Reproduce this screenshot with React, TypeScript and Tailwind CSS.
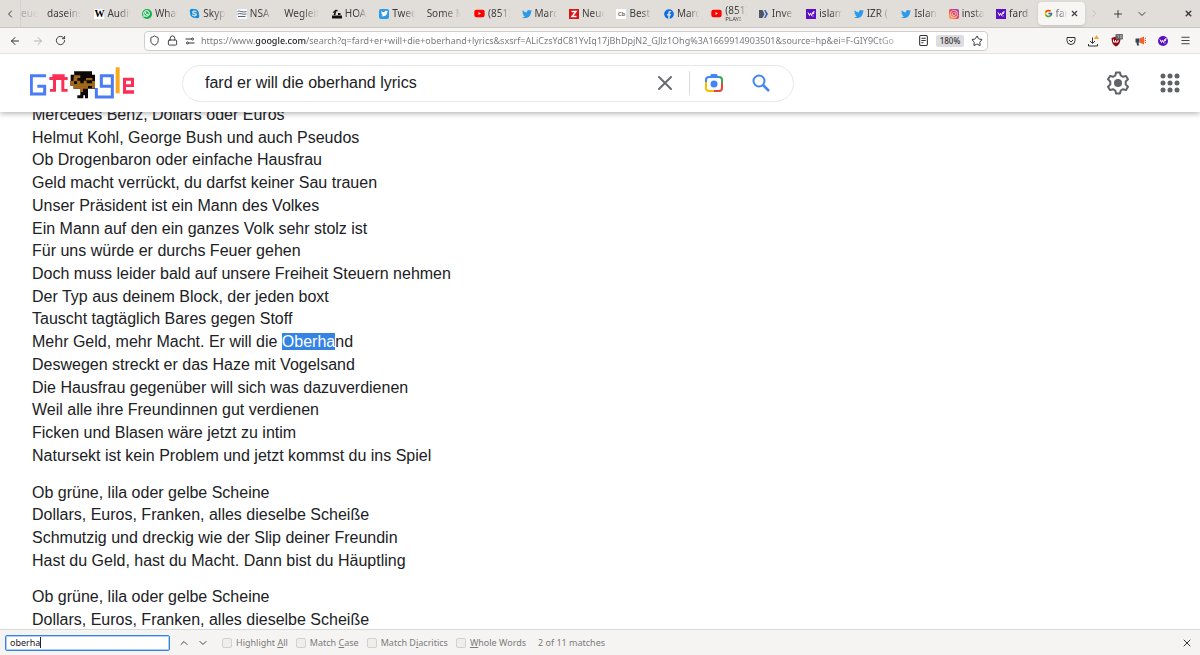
import { useState, type ReactNode } from "react";
import { ArrowLeft, ArrowRight, ChevronDown, ChevronLeft, ChevronRight, ChevronUp, Lock, Menu, Plus, RotateCw, Shield, Star, X } from "lucide-react";
import { FaWhatsapp, FaSkype, FaTwitter, FaYoutube, FaFacebook, FaInstagram } from "react-icons/fa";
import { FcGoogle } from "react-icons/fc";

const Yahoo = ({ round = false }: { round?: boolean }) => (
  <svg viewBox="0 0 20 20" className="size-[10px]">
    <rect width="20" height="20" rx={round ? 10 : 0} fill="#5b10c4" />
    <path d="M4 7l3 6 2-5 2 5 3-7M16 4l-1 6M14 13v2" stroke="#fff" strokeWidth="2" fill="none" />
  </svg>
);

const Bird = () => <FaTwitter className="size-[10px] text-[#2b9ae8]" />;
const Tube = () => <FaYoutube className="size-[11px] text-[#f00]" />;

type Tab = { icon?: ReactNode; title: string; note?: string };

const tabs: Tab[] = [
  { title: "daseins" },
  { icon: <span className="w-[10px] bg-white text-center font-['Liberation_Serif',serif] text-[10px] leading-[10px] font-bold text-black">W</span>, title: "Audit" },
  {
    icon: (
      <span className="flex size-[10px] items-center justify-center rounded-full bg-[#12b04c] text-white">
        <FaWhatsapp className="size-[7px]" strokeWidth={30} stroke="white" />
      </span>
    ),
    title: "What",
  },
  { icon: <FaSkype className="size-[11px] text-[#0a8de0]" />, title: "Skyp" },
  {
    icon: (
      <svg viewBox="0 0 20 20" className="size-[10px]">
        <path fill="#f8f8fa" d="M0 0h20v20H0z" />
        <path d="M1 5c5-3 7 3 18 0M1 10c6-3 9 2 18 0M2 15h15" stroke="#59647c" strokeWidth="2" fill="none" />
      </svg>
    ),
    title: "NSA",
  },
  { title: "Wegleit" },
  {
    icon: (
      <svg viewBox="0 0 20 20" className="size-[10px]">
        <path d="M0 19v-6h20v6zM3 12l2-5-4 1 3-4 4-3 5 3-5 1-1 7zM12 12V8h5v4z" fill="#111" />
      </svg>
    ),
    title: "HOA",
  },
  {
    icon: (
      <span className="flex size-[10px] items-center justify-center rounded-xs bg-[#2b9ae8] text-white">
        <FaTwitter className="size-[7px]" />
      </span>
    ),
    title: "Twee",
  },
  { title: "Some M" },
  { icon: <Tube />, title: "(851)" },
  { icon: <Bird />, title: "Marc" },
  {
    icon: (
      <svg viewBox="0 0 20 20" className="size-[10px]">
        <path fill="#d81414" d="M0 0h20v20H0z" />
        <path d="M5 5h9L6 15h9" stroke="#fff" strokeWidth="3" fill="none" />
      </svg>
    ),
    title: "Neue",
  },
  { icon: <span className="size-[10px] bg-white text-center text-[6px] leading-[10px] font-bold text-[#777]">Cb</span>, title: "Best" },
  { icon: <FaFacebook className="size-[10px] text-[#0f6fe8]" />, title: "Marc" },
  { icon: <Tube />, title: "(851)", note: "PLAYI" },
  {
    icon: (
      <svg viewBox="0 0 20 20" className="size-[10px]">
        <path d="M0 2h7l4 8-4 8H0z" fill="#4b5668" />
        <path d="M10 2h3l5 8-5 8h-3l4-8z" fill="#2f62ad" />
      </svg>
    ),
    title: "Inve",
  },
  { icon: <Yahoo />, title: "islam" },
  { icon: <Bird />, title: "IZR (" },
  { icon: <Bird />, title: "Islan" },
  {
    icon: (
      <span className="flex size-[10px] items-center justify-center rounded-xs bg-linear-to-tr from-[#fcb045] via-[#f0304c] to-[#833ab4] text-white">
        <FaInstagram className="size-[8px]" />
      </span>
    ),
    title: "insta",
  },
  { icon: <Yahoo />, title: "fard" },
];

function TabStrip() {
  return (
    <div className="flex h-7 shrink-0 items-stretch border-b border-[#c9c5c1] bg-[#e1deda] text-[10px] text-[#3c3c3c]">
      <button aria-label="Scroll tabs left" className="flex w-5 items-center justify-center"><ChevronLeft className="size-3" strokeWidth={2} /></button>
      <button className="w-[21px] overflow-hidden border-l border-[#d3cfcb] text-left text-[#aaa] mask-r-from-20% mask-r-to-90%">eue</button>
      <div className="grid min-w-0 flex-1 grid-cols-[repeat(22,minmax(0,1fr))]">
        {tabs.map((t, i) => (
          <button key={i} className="flex min-w-0 items-center gap-[3px] overflow-hidden pr-[3px] pl-[6px] text-left whitespace-nowrap">
            {t.icon && <span className="flex shrink-0">{t.icon}</span>}
            <span className="min-w-0 flex-1 overflow-hidden mask-r-from-45% mask-r-to-90%">
              {t.note ? (
                <span className="block pt-px leading-[9px]">{t.title}<span className="block text-[6px] leading-[8px]">{t.note}</span></span>
              ) : t.title}
            </span>
          </button>
        ))}
        <div className="my-[2px] flex min-w-0 items-center gap-[3px] rounded-sm bg-[#f7f6f5] px-[6px] shadow-sm">
          <FcGoogle className="size-[9px] shrink-0" />
          <button className="min-w-0 flex-1 overflow-hidden text-left whitespace-nowrap text-[#777] mask-r-from-40% mask-r-to-100%">far</button>
          <button aria-label="Close tab"><X className="size-[9px]" strokeWidth={3} /></button>
        </div>
      </div>
      <div className="flex w-[115px] shrink-0 items-center justify-between pr-[7px] pl-1">
        <button aria-label="Scroll tabs right"><ChevronRight className="size-[11px] text-[#bbb]" /></button>
        <button aria-label="New tab"><Plus className="size-3" /></button>
        <button aria-label="List all tabs"><ChevronDown className="size-3" /></button>
        <span className="w-3" />
        <button aria-label="Close window"><X className="size-[9px]" strokeWidth={4} /></button>
      </div>
    </div>
  );
}

function NavBar() {
  return (
    <div className="flex h-[26px] shrink-0 items-center border-b border-[#e6e4e2] bg-[#f7f6f5] text-[9px] text-[#333]">
      <div className="flex w-[144px] shrink-0 items-center gap-[11px] pl-[9px]">
        <button aria-label="Back"><ArrowLeft className="size-3" /></button>
        <button aria-label="Forward"><ArrowRight className="size-3 text-[#b5b3b1]" /></button>
        <button aria-label="Reload"><RotateCw className="size-[11px]" strokeWidth={2} /></button>
      </div>
      <div className="flex h-5 min-w-0 flex-1 items-center rounded-sm border border-[#d0cecb] bg-white px-1">
        <div className="flex shrink-0 items-center gap-[7px]">
          <Shield className="size-[11px]" strokeWidth={2} />
          <Lock className="size-[11px]" strokeWidth={2} />
          <svg viewBox="0 0 20 20" className="size-[10px]" fill="none" stroke="currentColor" strokeWidth="2">
            <path d="M1 6h12M7 14h12" /><circle cx="15" cy="6" r="2" /><circle cx="5" cy="14" r="2" />
          </svg>
        </div>
        <div className="ml-[6px] min-w-0 flex-1 overflow-hidden whitespace-nowrap text-[#7b7b80] mask-r-from-95% mask-r-to-100%">
          https://www.<span className="font-medium text-[#222]">google.com</span>/search?q=fard+er+will+die+oberhand+lyrics&sxsrf=ALiCzsYdC81YvIq17jBhDpjN2_GJlz1Ohg%3A1669914903501&source=hp&ei=F-GIY9CtGo
        </div>
        <div className="ml-[6px] flex shrink-0 items-center gap-[7px]">
          <button aria-label="Reader view">
            <svg viewBox="0 0 20 20" className="size-[11px]" fill="none" stroke="currentColor" strokeWidth="2"><rect x="3" y="1" width="14" height="18" rx="2" /><path d="M6 6h8M6 10h8M6 14h4" /></svg>
          </button>
          <button className="h-3 w-7 rounded-xs bg-[#dddce0] text-[8px] leading-3 font-medium">180%</button>
          <button aria-label="Bookmark"><Star className="size-3" /></button>
        </div>
      </div>
      <div className="flex w-[212px] shrink-0 items-center justify-end gap-3 pr-[9px]">
        <button aria-label="Save to Pocket">
          <svg viewBox="0 0 20 20" className="size-[10px]" fill="none" stroke="currentColor" strokeWidth="2"><path d="M2 3h16v6a8 8 0 0 1-16 0zM6 8l4 4 4-4" /></svg>
        </button>
        <button aria-label="Downloads">
          <svg viewBox="0 0 22 24" className="h-3 w-[11px]" fill="none" stroke="currentColor" strokeWidth="2"><path d="M9 5v11M4 12l5 5 5-5M1 18v4h18v-4" /><path d="M17 0l5 8H12z" fill="#f2a52b" stroke="none" /></svg>
        </button>
        <button aria-label="uBlock Origin">
          <svg viewBox="0 0 24 26" className="h-[13px] w-3"><path d="M1 8l9-3 9 3c0 9-3 14-9 17C4 22 1 17 1 8z" fill="#8d0a14" /><path d="M5 11v5h4v-4m0 4h5v-4" stroke="#fff" strokeWidth="2" fill="none" /><rect x="9" y="0" width="15" height="11" rx="2" fill="#666" /><path d="M12 3h3v5m4-5h3v5h-3z" stroke="#ccc" fill="none" /></svg>
        </button>
        <button aria-label="Announcements">
          <svg viewBox="0 0 22 20" className="h-[10px] w-[11px]"><path d="M1 5h8v8H7l1 6H4l-1-6H1z" fill="#34445c" /><path d="M9 5l9-4v16l-9-4z" fill="#f0642c" /><path d="M19 6l3-2M19 9h3M19 12l3 2" stroke="#f0642c" strokeWidth="2" /></svg>
        </button>
        <button aria-label="Yahoo"><Yahoo round /></button>
        <button aria-label="Menu"><Menu className="size-[11px]" /></button>
      </div>
    </div>
  );
}

function Doodle() {
  return (
    <svg viewBox="90 41 315 96" className="h-8 w-[105px]" role="img" aria-label="Google">
      <g fill="none" strokeWidth="9">
        <path d="M138 67H94v55h40V99h-22" stroke="#4a7cf6" />
        <path d="M304 103V67h33v64h-48v-27M304 99h33" stroke="#4a7cf6" />
      </g>
      <path d="M369 73h33v28h-24v10h24v10h-33zM378 82v11h15V82z" fill="#fb2f55" fillRule="evenodd" />
      <path d="M157 63h37v8h9v9h-10v27h10v8h-19V80h-16v35h-18v-8h9V80h-11v-9h9z" fill="#fb2f55" />
      <path d="M347 42h12v78h-12z" fill="#fba81c" />
      <path d="M222 54h54v10h9v42h-21v29h-9v-9h-5v9h-18v-9h9v-20h-20v-9h-9V64h11z" fill="#0c0805" />
      <path d="M222 66h19v8h-9v8h9v8h10v-8h9v8h16v8h-12v8h-44v-9h-10V83h10zM258 74h19v7h-19zM276 83h9v22h-9zM240 106h9v10h-9z" fill="#a0681a" />
      <path d="M222 84h9v8h-9zM241 75h9v9h-9z" fill="#0c0805" />
    </svg>
  );
}

function SearchHeader() {
  const [query, setQuery] = useState("fard er will die oberhand lyrics");
  return (
    <header className="z-10 flex h-[58px] shrink-0 items-center bg-white pr-[18px] pl-[30px] shadow-[0_1px_6px_rgba(32,33,36,0.4)]">
      <a href="#" className="mr-[47px] shrink-0"><Doodle /></a>
      <form className="flex h-[37px] w-full max-w-[612px] items-center rounded-full border border-[#e6e7e9] px-[22px]">
        <input aria-label="Search" value={query} onChange={(e) => setQuery(e.target.value)} className="min-w-0 flex-1 text-[16px] text-[#202124] outline-none" />
        <button type="button" aria-label="Clear">
          <svg viewBox="0 0 20 20" className="size-5" stroke="#686c70" strokeWidth="2" strokeLinecap="round"><path d="M4 4l12 12M16 4L4 16" /></svg>
        </button>
        <span className="mx-[14px] h-6 w-px bg-[#dadce0]" />
        <button type="button" aria-label="Search by image" className="mr-[27px]">
          <svg viewBox="0 0 20 20" className="size-5" fill="none" strokeWidth="2">
            <path d="M2 9V7a3 3 0 0 1 3-3h10" stroke="#4285f4" />
            <path d="M6 4l1-3h6l1 3z" fill="#4285f4" />
            <path d="M15 4a3 3 0 0 1 3 3v3" stroke="#34a853" />
            <path d="M18 10v5a3 3 0 0 1-3 3h-5" stroke="#ea4335" />
            <path d="M2 9v6a3 3 0 0 0 3 3h5" stroke="#fbbc04" />
            <circle cx="10" cy="11" r="3.500" fill="#4285f4" />
          </svg>
        </button>
        <button aria-label="Google Search">
          <svg viewBox="0 0 20 20" className="size-5" fill="none" stroke="#4285f4" strokeWidth="2"><circle cx="8" cy="8" r="5.500" /><path d="M12 12l6 6" strokeWidth="2.500" /></svg>
        </button>
      </form>
      <div className="ml-auto flex shrink-0 items-center gap-7 text-[#5f6368]">
        <button aria-label="Settings">
          <svg viewBox="0 0 24 24" className="size-6">
            <path d="M10 1.500h4l.7 3 2.300 1.300 3-.9 2 3.400-2.300 2.200v3l2.300 2.200-2 3.400-3-.9-2.300 1.300-.7 3h-4l-.7-3L7 18.200l-3 .9-2-3.400 2.300-2.200v-3L2 8.300l2-3.400 3 .9 2.300-1.300z" fill="none" stroke="currentColor" strokeWidth="2" strokeLinejoin="round" />
            <circle cx="12" cy="12" r="4" fill="currentColor" />
          </svg>
        </button>
        <button aria-label="Google apps">
          <svg viewBox="0 0 24 24" className="size-6" fill="currentColor">
            {[5, 12, 19].map((y) => [5, 12, 19].map((x) => <circle key={`${x}-${y}`} cx={x} cy={y} r="2.500" />))}
          </svg>
        </button>
      </div>
    </header>
  );
}

const stanzas: ReactNode[][] = [
  [
    "Mercedes Benz, Dollars oder Euros",
    "Helmut Kohl, George Bush und auch Pseudos",
    "Ob Drogenbaron oder einfache Hausfrau",
    "Geld macht verrückt, du darfst keiner Sau trauen",
    "Unser Präsident ist ein Mann des Volkes",
    "Ein Mann auf den ein ganzes Volk sehr stolz ist",
    "Für uns würde er durchs Feuer gehen",
    "Doch muss leider bald auf unsere Freiheit Steuern nehmen",
    "Der Typ aus deinem Block, der jeden boxt",
    "Tauscht tagtäglich Bares gegen Stoff",
    <>Mehr Geld, mehr Macht. Er will die <mark className="bg-[#3584e4] text-white">Oberha</mark>nd</>,
    "Deswegen streckt er das Haze mit Vogelsand",
    "Die Hausfrau gegenüber will sich was dazuverdienen",
    "Weil alle ihre Freundinnen gut verdienen",
    "Ficken und Blasen wäre jetzt zu intim",
    "Natursekt ist kein Problem und jetzt kommst du ins Spiel",
  ],
  [
    "Ob grüne, lila oder gelbe Scheine",
    "Dollars, Euros, Franken, alles dieselbe Scheiße",
    "Schmutzig und dreckig wie der Slip deiner Freundin",
    "Hast du Geld, hast du Macht. Dann bist du Häuptling",
  ],
  ["Ob grüne, lila oder gelbe Scheine", "Dollars, Euros, Franken, alles dieselbe Scheiße"],
];

const options: [string, string, string][] = [
  ["Highlight ", "A", "ll"],
  ["Match ", "C", "ase"],
  ["Match D", "i", "acritics"],
  ["", "W", "hole Words"],
];

function FindBar() {
  const [term, setTerm] = useState("oberha");
  return (
    <div className="flex h-[26px] shrink-0 items-center border-t border-[#d8dadb] bg-[#f5f4f2] pr-[7px] pl-[5px] text-[9px] text-[#7b7b7b]">
      <div className="flex h-4 w-[165px] items-center rounded-xs border border-[#3584e4] bg-white px-1 ring-1 ring-[#3584e4]/40 ring-inset">
        <input aria-label="Find in page" value={term} onChange={(e) => setTerm(e.target.value)} className="field-sizing-content text-[#222] outline-none" />
        <span className="h-[11px] w-px bg-[#222]" />
      </div>
      <button aria-label="Previous match" className="ml-2 text-[#444]"><ChevronUp className="size-3" /></button>
      <button aria-label="Next match" className="ml-[7px] text-[#444]"><ChevronDown className="size-3" /></button>
      <div className="ml-[13px] flex items-center gap-2">
        {options.map(([a, key, b]) => (
          <label key={a + key} className="flex items-center gap-1 whitespace-nowrap">
            <input type="checkbox" className="size-[10px] appearance-none rounded-xs border border-[#d3d0cd] bg-[#f0eeec] checked:bg-[#3584e4]" />
            <span>{a}<u>{key}</u>{b}</span>
          </label>
        ))}
        <span className="ml-1 whitespace-nowrap">2 of 11 matches</span>
      </div>
      <button aria-label="Close find bar" className="ml-auto text-[#333]"><X className="size-3" /></button>
    </div>
  );
}

export default function App() {
  return (
    <div className="flex h-screen flex-col overflow-hidden bg-white font-['Noto_Sans',sans-serif]">
      <TabStrip />
      <NavBar />
      <div className="flex min-h-0 flex-1 flex-col overflow-hidden font-['Liberation_Sans',sans-serif]">
        <SearchHeader />
        <main className="-mt-2 min-h-0 flex-1 space-y-[14px] overflow-hidden px-8 text-[16px] leading-[1.42] text-[#202124]">
          {stanzas.map((lines, i) => (
            <p key={i}>{lines.map((line, j) => <span key={j} className="block">{line}</span>)}</p>
          ))}
        </main>
      </div>
      <FindBar />
    </div>
  );
}
